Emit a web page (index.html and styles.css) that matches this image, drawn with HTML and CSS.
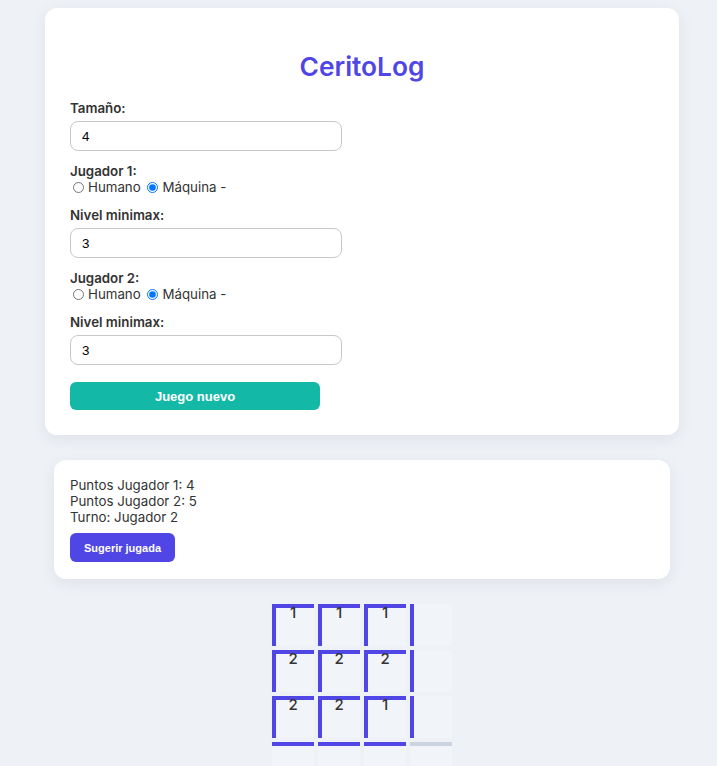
FILE: index.html
```html
<!DOCTYPE html>
<html lang="es">
<head>
<meta charset="utf-8">
<title>CeritoLog</title>
<link rel="stylesheet" href="styles.css">
</head>
<body>
<div class="page">
  <div class="card config">
    <h1 class="title">CeritoLog</h1>
    <label class="lbl">Tamaño:</label>
    <input class="field" type="text" value="4">
    <div class="lbl">Jugador 1:</div>
    <div class="radios"><label><input type="radio" name="j1">Humano</label> <label><input type="radio" name="j1" checked>Máquina</label> -</div>
    <label class="lbl">Nivel minimax:</label>
    <input class="field" type="text" value="3">
    <div class="lbl">Jugador 2:</div>
    <div class="radios"><label><input type="radio" name="j2">Humano</label> <label><input type="radio" name="j2" checked>Máquina</label> -</div>
    <label class="lbl">Nivel minimax:</label>
    <input class="field last" type="text" value="3">
    <button class="btn-new">Juego nuevo</button>
  </div>
  <div class="card status">
    <div class="line">Puntos Jugador 1: 4</div>
    <div class="line">Puntos Jugador 2: 5</div>
    <div class="line">Turno: Jugador 2</div>
    <button class="btn-suggest">Sugerir jugada</button>
  </div>
  <div class="board">
    <div class="cell"><span class="h on"></span><span class="v on"></span><span class="num">1</span></div>
    <div class="cell"><span class="h on"></span><span class="v on"></span><span class="num">1</span></div>
    <div class="cell"><span class="h on"></span><span class="v on"></span><span class="num">1</span></div>
    <div class="cell-edge"></div>
    <div class="cell"><span class="h on"></span><span class="v on"></span><span class="num">2</span></div>
    <div class="cell"><span class="h on"></span><span class="v on"></span><span class="num">2</span></div>
    <div class="cell"><span class="h on"></span><span class="v on"></span><span class="num">2</span></div>
    <div class="cell-edge"></div>
    <div class="cell"><span class="h on"></span><span class="v on"></span><span class="num">2</span></div>
    <div class="cell"><span class="h on"></span><span class="v on"></span><span class="num">2</span></div>
    <div class="cell"><span class="h on"></span><span class="v on"></span><span class="num">1</span></div>
    <div class="cell-edge"></div>
    <div class="cell"><span class="h on"></span></div>
    <div class="cell"><span class="h on"></span></div>
    <div class="cell"><span class="h on"></span></div>
    <div class="cell"><span class="h off"></span></div>
  </div>
</div>
</body>
</html>
```

FILE: styles.css
```css
html, body {
  margin: 0;
  padding: 0;
}
body {
  background: #eef1f6;
  font-family: Inter, "Noto Sans", sans-serif;
  color: #333;
  font-size: 13.3px;
}
.page {
  padding: 8px 38px 0 45px;
}
.card {
  background: #fff;
  border-radius: 12px;
  box-shadow: 0 4px 16px rgba(30, 41, 59, 0.07);
}
.config {
  padding: 25px 25px 25px;
  display: flex;
  flex-direction: column;
  align-items: flex-start;
}
.title {
  align-self: stretch;
  text-align: center;
  margin: 18px 0 18px;
  font-size: 26.3px;
  line-height: 31px;
  font-weight: 600;
  color: #4f46e5;
}
.lbl {
  display: block;
  font-weight: 600;
  line-height: 16px;
  margin-bottom: 0;
}
label.lbl {
  margin-bottom: 5px;
}
.field {
  box-sizing: border-box;
  width: 272px;
  height: 30px;
  border: 1px solid #c8c8c8;
  border-radius: 8px;
  padding: 0 11px;
  font-family: "Liberation Sans", Arial, sans-serif;
  font-size: 13.33px;
  color: #000;
  margin: 0 0 12px;
  background: #fff;
}
.field.last {
  margin-bottom: 17px;
}
.radios {
  line-height: 16px;
  margin-bottom: 12px;
  white-space: pre;
}
.radios input {
  width: 11px;
  height: 11px;
  margin: 0 4px 0 3px;
  vertical-align: -1px;
}
.btn-new {
  width: 250px;
  height: 28px;
  border: none;
  border-radius: 6px;
  background: #14b8a6;
  color: #fff;
  font-family: "Liberation Sans", Arial, sans-serif;
  font-weight: 700;
  font-size: 13px;
  padding: 0;
}
.status {
  margin: 25px 9px 0;
  padding: 17px 16px 17px;
}
.line {
  line-height: normal;
}
.btn-suggest {
  margin-top: 8px;
  width: 105px;
  height: 29px;
  border: none;
  border-radius: 6px;
  background: #4f46e5;
  color: #fff;
  font-family: "Liberation Sans", Arial, sans-serif;
  font-weight: 700;
  font-size: 11px;
  padding: 0;
}
.board {
  margin-top: 25px;
  display: grid;
  grid-template-columns: repeat(4, 42px);
  grid-auto-rows: 42px;
  gap: 4px;
  justify-content: center;
}
.cell {
  display: grid;
  grid-template-columns: 4px 38px;
  grid-template-rows: 4px 38px;
  background: #f1f4f9;
}
.cell-edge {
  box-sizing: border-box;
  width: 42px;
  height: 42px;
  border-left: 4px solid #4f46e5;
  background: #f1f4f9;
}
.h {
  grid-column: 1 / 3;
  grid-row: 1;
}
.v {
  grid-column: 1;
  grid-row: 1 / 3;
}
.on {
  background: #4f46e5;
}
.off {
  background: #cbd5e1;
}
.num {
  grid-column: 1 / 3;
  grid-row: 2;
  text-align: center;
  font-size: 15px;
  line-height: 10px;
  font-weight: 500;
  color: #333;
}
```
